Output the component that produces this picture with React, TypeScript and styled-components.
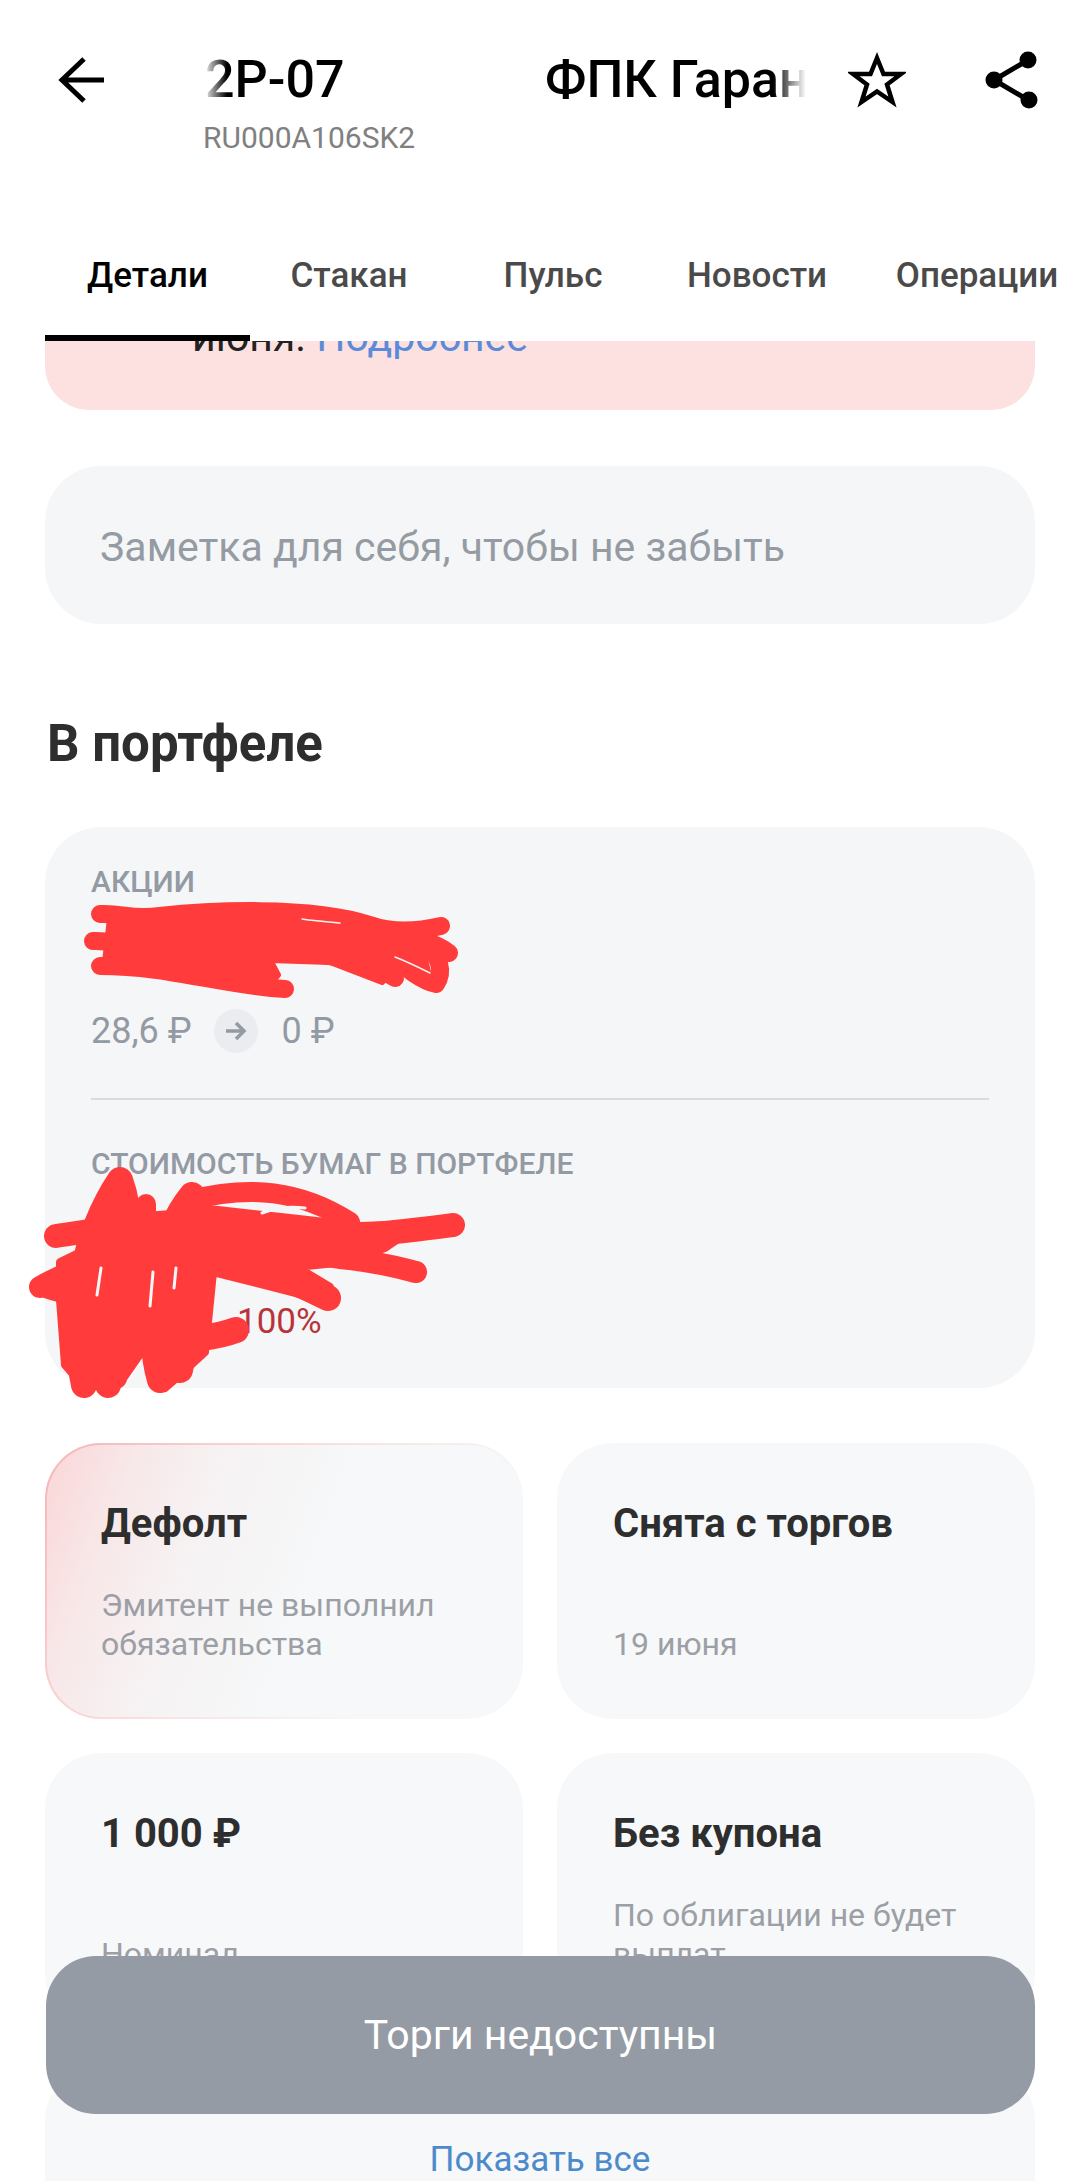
import styled, { createGlobalStyle } from 'styled-components';

const GlobalStyle = createGlobalStyle`
  html, body {
    margin: 0;
    padding: 0;
    background: #fff;
    font-family: Roboto, "Noto Sans", sans-serif;
  }
  * { box-sizing: border-box; }
`;

const Page = styled.div`
  position: relative;
  width: 1080px;
  height: 2181px;
  overflow: hidden;
  display: flex;
  flex-direction: column;
  background: #fff;
`;

const Header = styled.header`
  flex: none;
  height: 240px;
  padding: 52px 0 0 57px;
  display: flex;
  align-items: flex-start;
`;

const BackButton = styled.div`
  flex: none;
  width: 146px;
  height: 56px;
  display: flex;
  align-items: center;
`;

const TitleBlock = styled.div`
  flex: none;
  width: 603px;
`;

const Marquee = styled.div`
  height: 56px;
  line-height: 56px;
  font-size: 52px;
  font-weight: 500;
  color: #000;
  white-space: nowrap;
  overflow: hidden;
  display: flex;
  padding-left: 2px;
  mask-image: linear-gradient(90deg, transparent 0, #000 24px, #000 570px, transparent 603px);
`;

const MarqueePart = styled.span<{ $width?: number }>`
  flex: none;
  width: ${p => (p.$width ? `${p.$width}px` : 'auto')};
`;

const Ticker = styled.div`
  margin-top: 14px;
  font-size: 30px;
  line-height: 32px;
  color: #808080;
`;

const HeaderIcon = styled.svg`
  flex: none;
  display: block;
`;

const StarIcon = styled(HeaderIcon)`
  margin-left: 42px;
`;

const ShareIcon = styled(HeaderIcon)`
  margin: -6px 0 0 72px;
`;

const Tabs = styled.nav`
  flex: none;
  height: 101px;
  padding-left: 45px;
  display: flex;
  overflow: hidden;
`;

const Tab = styled.div<{ $active?: boolean }>`
  flex: none;
  width: 204px;
  padding-top: 16px;
  text-align: center;
  font-size: 35px;
  line-height: 40px;
  font-weight: 500;
  white-space: nowrap;
  color: ${p => (p.$active ? '#000' : '#4a4a4a')};
  border-bottom: 6px solid ${p => (p.$active ? '#000' : 'transparent')};

  &:nth-child(2) { margin-left: -3px; }
  &:last-child { margin-left: 16px; }
  &:first-child { width: 205px; }
`;

const Content = styled.main`
  flex: 1;
  min-height: 0;
  overflow: hidden;
  padding: 0 45px;
`;

const Banner = styled.div`
  margin-top: -88px;
  padding: 60px 0 49px 147px;
  border-radius: 44px;
  background: #fde0e0;
  font-size: 41px;
  line-height: 48px;
  color: #222;
`;

const BannerLink = styled.span`
  color: #5b8bd8;
`;

const NoteField = styled.div`
  margin-top: 56px;
  height: 158px;
  padding: 3px 0 0 55px;
  display: flex;
  align-items: center;
  border-radius: 56px;
  background: #f5f6f8;
  font-size: 41px;
  color: #959ba3;
`;

const SectionTitle = styled.h2`
  margin: 90px 0 0 2px;
  height: 60px;
  font-size: 51px;
  line-height: 60px;
  font-weight: 700;
  color: #2e2e2e;
`;

const PortfolioCard = styled.section`
  margin-top: 53px;
  height: 561px;
  padding: 39px 46px 0;
  border-radius: 56px;
  background: #f5f6f8;
`;

const CardLabel = styled.div`
  font-size: 30px;
  line-height: 32px;
  font-weight: 500;
  color: #939aa3;
`;

const PriceRow = styled.div`
  margin-top: 111px;
  height: 44px;
  display: flex;
  align-items: center;
  font-size: 36px;
  color: #939aa3;
`;

const ArrowChip = styled.div`
  width: 44px;
  height: 44px;
  margin: 0 24px 0 22px;
  border-radius: 50%;
  background: #eaecef;
  display: flex;
  align-items: center;
  justify-content: center;
`;

const Divider = styled.hr`
  margin: 45px 0 0;
  border: 0;
  height: 2px;
  background: #d8dbdf;
`;

const LabelBelowDivider = styled(CardLabel)`
  margin-top: 48px;
`;

const ChangeValue = styled.div`
  margin: 122px 0 0 146px;
  font-size: 35px;
  line-height: 40px;
  color: #b8343a;
`;

const InfoGrid = styled.div`
  margin-top: 55px;
  display: grid;
  grid-template-columns: 478px 478px;
  gap: 34px 34px;
`;

const InfoCard = styled.div<{ $alert?: boolean }>`
  height: 276px;
  padding: 56px 56px 55px;
  display: flex;
  flex-direction: column;
  justify-content: space-between;
  border-radius: 56px;
  background: #f6f8f9;
  ${p => p.$alert && `
    padding: 54px 54px 53px;
    border: 2px solid transparent;
    background:
      linear-gradient(110deg, #fad6d7 0%, #f8e8e9 16%, #f6f2f3 32%, #f6f8f9 55%) padding-box,
      linear-gradient(125deg, #f6b4b6 0%, #fadddd 40%, #f6f8f9 75%) border-box;
  `}
`;

const InfoTitle = styled.div`
  font-size: 40px;
  line-height: 50px;
  font-weight: 700;
  color: #2e2e2e;
`;

const InfoText = styled.div`
  font-size: 32px;
  line-height: 39px;
  color: #9c9fa5;
`;

const ShowAllCard = styled.div`
  margin-top: 36px;
  height: 130px;
  padding-top: 73px;
  border-radius: 56px 56px 0 0;
  background: #f6f8f9;
  text-align: center;
  font-size: 35px;
  line-height: 44px;
  color: #4d8acb;
`;

const TradeButton = styled.div`
  position: absolute;
  left: 46px;
  right: 45px;
  bottom: 67px;
  height: 158px;
  display: flex;
  align-items: center;
  justify-content: center;
  border-radius: 50px;
  background: #949ba4;
  color: #fff;
  font-size: 41px;
`;

const ScribbleLayer = styled.svg`
  position: absolute;
  left: 0;
  top: 0;
  pointer-events: none;
`;

const infoCards = [
  { title: 'Дефолт', text: ['Эмитент не выполнил', 'обязательства'], alert: true },
  { title: 'Снята с торгов', text: ['19 июня'] },
  { title: '1 000 ₽', text: ['Номинал'] },
  { title: 'Без купона', text: ['По облигации не будет', 'выплат'] },
];

const tabs = ['Детали', 'Стакан', 'Пульс', 'Новости', 'Операции'];

function Scribbles() {
  return (
    <ScribbleLayer width={1080} height={2181} viewBox="0 0 1080 2181">
      <g fill="none" stroke="#ff3b3b" strokeWidth={18} strokeLinecap="round" strokeLinejoin="round">
        <path fill="#ff3b3b" strokeWidth={6} d="M110 918L270 908L360 920L420 938L428 972L400 965L382 982L330 962L270 960L278 975L270 985L200 975L105 962Z" />
        <path d="M100 914C125 913 130 920 160 916C205 911 310 905 370 925C390 932 415 932 441 926" />
        <path d="M93 941C115 940 120 948 150 945L300 942C370 935 420 930 449 953" />
        <path d="M100 966C170 966 220 985 285 989" />
        <path d="M120 958C180 952 240 958 267 970" />
        <path d="M270 950C320 955 360 955 395 978" />
        <path d="M385 948C405 970 425 982 436 984C444 972 440 955 425 945" />
      </g>
      <g fill="none" stroke="#f5f6f8" strokeWidth={1.5} strokeLinecap="round">
        <path d="M302 919C315 921 328 922 340 923" />
        <path d="M395 957C408 962 420 968 430 973" />
      </g>
      <g fill="none" stroke="#ff3b3b" strokeLinecap="round" strokeLinejoin="round">
        <path fill="#ff3b3b" strokeWidth={8} d="M130 1228L200 1208L290 1218L360 1226L420 1224L385 1248L345 1262L297 1267L330 1287L335 1303L213 1272L205 1352L180 1375L165 1388L143 1350L120 1383L100 1383L85 1388L65 1365L60 1300L60 1262Z" />
        <path strokeWidth={24} d="M56 1236C130 1225 200 1212 290 1232C340 1240 400 1232 453 1225" />
        <path strokeWidth={22} d="M110 1240C210 1245 300 1250 340 1258C380 1262 400 1268 416 1272" />
        <path strokeWidth={26} d="M150 1240C220 1250 270 1270 328 1298" />
        <path strokeWidth={20} d="M190 1200C250 1185 300 1190 350 1222" />
        <path strokeWidth={26} d="M150 1338C190 1342 220 1336 236 1330" />
        <path strokeWidth={22} d="M40 1287C70 1270 100 1260 130 1250" />
        <path strokeWidth={18} d="M40 1287C60 1295 70 1296 90 1296" />
        <path strokeWidth={26} d="M84 1385C70 1320 80 1240 120 1180C135 1220 130 1270 108 1385" />
        <path strokeWidth={22} d="M116 1378C110 1330 125 1250 142 1210" />
        <path strokeWidth={26} d="M160 1380C145 1330 155 1240 192 1195C198 1250 190 1320 180 1370" />
        <path strokeWidth={20} d="M146 1204L146 1240" />
      </g>
      <g fill="none" stroke="#f5f6f8" strokeWidth={3} strokeLinecap="round">
        <path d="M101 1268L97 1295" />
        <path d="M153 1272L150 1306" />
        <path d="M176 1268L174 1288" />
        <path d="M262 1213C275 1208 290 1206 305 1208" />
      </g>
    </ScribbleLayer>
  );
}

export default function App() {
  return (
    <Page>
      <GlobalStyle />
      <Header>
        <BackButton>
          <HeaderIcon width={50} height={50} viewBox="0 0 50 50" fill="none" stroke="#000" strokeWidth={5}>
            <path d="M27 4L5 25L27 46M5 25H47" />
          </HeaderIcon>
        </BackButton>
        <TitleBlock>
          <Marquee>
            <MarqueePart $width={340}>2P-07</MarqueePart>
            <MarqueePart>ФПК Гарант-Инвест</MarqueePart>
          </Marquee>
          <Ticker>RU000A106SK2</Ticker>
        </TitleBlock>
        <StarIcon width={58} height={56} viewBox="0 0 58 56" fill="none" stroke="#000" strokeWidth={4.5}>
          <path d="M29 6L35.5 22H53L39 32.5L44.5 50L29 39.5L13.5 50L19 32.5L5 22H22.5Z" />
        </StarIcon>
        <ShareIcon width={60} height={72} viewBox="0 0 60 72" fill="#000" stroke="#000" strokeWidth={5}>
          <path d="M50 14L16 34L50 54" fill="none" />
          <circle cx={50} cy={14} r={6} />
          <circle cx={16} cy={34} r={6} />
          <circle cx={51} cy={54} r={6} />
        </ShareIcon>
      </Header>
      <Tabs>
        {tabs.map((tab, i) => (
          <Tab key={tab} $active={i === 0}>{tab}</Tab>
        ))}
      </Tabs>
      <Content>
        <Banner>
          июня. <BannerLink>Подробнее</BannerLink>
        </Banner>
        <NoteField>Заметка для себя, чтобы не забыть</NoteField>
        <SectionTitle>В портфеле</SectionTitle>
        <PortfolioCard>
          <CardLabel>АКЦИИ</CardLabel>
          <PriceRow>
            28,6 ₽
            <ArrowChip>
              <svg width={22} height={20} viewBox="0 0 22 20" fill="none" stroke="#939aa3" strokeWidth={3.5}>
                <path d="M1 10H19M11 2L19 10L11 18" />
              </svg>
            </ArrowChip>
            0 ₽
          </PriceRow>
          <Divider />
          <LabelBelowDivider>СТОИМОСТЬ БУМАГ В ПОРТФЕЛЕ</LabelBelowDivider>
          <ChangeValue>100%</ChangeValue>
        </PortfolioCard>
        <InfoGrid>
          {infoCards.map(card => (
            <InfoCard key={card.title} $alert={card.alert}>
              <InfoTitle>{card.title}</InfoTitle>
              <InfoText>
                {card.text.map(line => (
                  <div key={line}>{line}</div>
                ))}
              </InfoText>
            </InfoCard>
          ))}
        </InfoGrid>
        <ShowAllCard>Показать все</ShowAllCard>
      </Content>
      <Scribbles />
      <TradeButton>Торги недоступны</TradeButton>
    </Page>
  );
}
